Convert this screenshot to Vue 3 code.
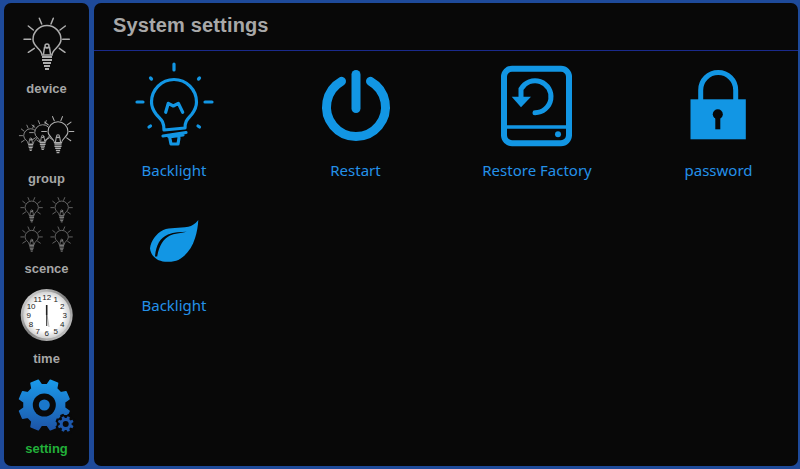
<script setup>
// 侧栏齿轮 + 时钟刻度都由数据算出来
function gearPath(cx, cy, rOut, rRoot, teeth) {
  const step = (Math.PI * 2) / teeth;
  const pts = [];
  for (let i = 0; i < teeth; i++) {
    const a = i * step - Math.PI / 2 + step / 2;
    const corners = [
      [rRoot, a - step * 0.32],
      [rOut, a - step * 0.2],
      [rOut, a + step * 0.2],
      [rRoot, a + step * 0.32]
    ];
    corners.forEach(([r, t]) => {
      pts.push((cx + r * Math.cos(t)).toFixed(1) + " " + (cy + r * Math.sin(t)).toFixed(1));
    });
  }
  return "M" + pts.join("L") + "Z";
}

const bigGear = gearPath(40.3, 39, 25.5, 20.5, 8);
const smallGear = gearPath(61.7, 58, 8, 6, 8);
const haloGear = gearPath(61.7, 58, 10.5, 9, 8);

const clockNums = Array.from({ length: 12 }, (_, i) => {
  const n = i + 1;
  const a = (n * Math.PI) / 6;
  return {
    n,
    x: (42.7 + 18 * Math.sin(a)).toFixed(1),
    y: (39 - 18 * Math.cos(a) + 3).toFixed(1)
  };
});

const groupBulbs = [
  { x: 26.7, y: 40, s: 0.5 },
  { x: 38.7, y: 37, s: 0.57 },
  { x: 54, y: 36, s: 0.71 }
];
const sceneBulbs = [
  { x: 27.7, y: 22 },
  { x: 57.7, y: 22 },
  { x: 27.7, y: 51.3 },
  { x: 57.7, y: 51.3 }
];
</script>

<template>
  <div class="page">
    <aside class="sidebar">
      <div class="nav-item">
        <svg class="nav-icon" viewBox="0 0 85 74">
          <defs>
            <symbol id="bulb" viewBox="0 0 48 56">
              <g fill="none" stroke="currentColor" stroke-width="1.5" stroke-linecap="round">
                <path d="M16.3 2.3L18.7 8M30.3 2.3L28 8M5.3 10L10.3 14M42.3 10L37 14M1 23.3H7.7M39.7 23.3H46.3M5.3 36.3L11.3 32.3M42 36.3L36.3 32.3" />
                <path fill="#090909" d="M19 39C19 33 10 31 10 23.5A14 14 0 1 1 38 23.5C38 31 29 33 29 39Z" />
                <path d="M20.5 38L21.5 31.5H26.5L27.5 38" />
                <circle cx="24" cy="30" r="2" />
              </g>
              <g fill="none" stroke="currentColor" stroke-width="2">
                <path d="M19 41H29M19 44H29M20 47H28M21 50H27" />
                <path d="M22 53H26" />
              </g>
            </symbol>
          </defs>
          <use class="bulb-light" href="#bulb" x="19" y="10" width="48" height="56" />
        </svg>
        <span class="nav-label">device</span>
      </div>

      <div class="nav-item">
        <svg class="nav-icon" viewBox="0 0 85 74">
          <use
            v-for="b in groupBulbs"
            :key="b.x"
            class="bulb-light"
            href="#bulb"
            :x="b.x - 24 * b.s"
            :y="b.y - 24 * b.s"
            :width="48 * b.s"
            :height="56 * b.s"
          />
        </svg>
        <span class="nav-label">group</span>
      </div>

      <div class="nav-item">
        <svg class="nav-icon" viewBox="0 0 85 74">
          <use
            v-for="b in sceneBulbs"
            :key="b.x + '-' + b.y"
            class="bulb-dim"
            href="#bulb"
            :x="b.x - 11.5"
            :y="b.y - 11.5"
            width="23"
            height="26.8"
          />
        </svg>
        <span class="nav-label">scence</span>
      </div>

      <div class="nav-item">
        <svg class="nav-icon" viewBox="0 0 85 74">
          <defs>
            <linearGradient id="ring" x1="0" y1="0" x2="1" y2="1">
              <stop offset="0" stop-color="#e6e6e6" />
              <stop offset="0.5" stop-color="#7f7f7f" />
              <stop offset="1" stop-color="#d8d8d8" />
            </linearGradient>
            <radialGradient id="face" cx="0.5" cy="0.5" r="0.5">
              <stop offset="0.7" stop-color="#ffffff" />
              <stop offset="1" stop-color="#d0d0d0" />
            </radialGradient>
          </defs>
          <circle cx="42.7" cy="39" r="26" fill="url(#ring)" />
          <circle cx="42.7" cy="39" r="23.5" fill="url(#face)" />
          <text
            v-for="c in clockNums"
            :key="c.n"
            class="clock-num"
            :x="c.x"
            :y="c.y"
            text-anchor="middle"
          >{{ c.n }}</text>
          <path d="M43 39L45 51" stroke="#bdbdbd" stroke-width="1" />
          <path d="M42.7 39V29" stroke="#222" stroke-width="1.6" />
          <path d="M42.7 39V50" stroke="#333" stroke-width="1.1" />
        </svg>
        <span class="nav-label">time</span>
      </div>

      <div class="nav-item">
        <svg class="nav-icon" viewBox="0 0 85 74">
          <defs>
            <linearGradient id="gearFill" x1="0" y1="0" x2="0" y2="1">
              <stop offset="0" stop-color="#1a9aea" />
              <stop offset="1" stop-color="#1d55a8" />
            </linearGradient>
          </defs>
          <path :d="bigGear" fill="url(#gearFill)" stroke="url(#gearFill)" stroke-width="1.5" stroke-linejoin="round" />
          <circle cx="40.3" cy="39" r="11.5" fill="#090909" />
          <circle cx="40.3" cy="39" r="5.5" fill="#1a78cc" />
          <path :d="haloGear" fill="#090909" />
          <path :d="smallGear" fill="#1d58ac" />
          <circle cx="61.7" cy="58" r="3" fill="#090909" />
        </svg>
        <span class="nav-label active">setting</span>
      </div>
    </aside>

    <main class="main">
      <header class="header">System settings</header>
      <div class="tiles">
        <div class="tile">
          <svg class="tile-icon" viewBox="0 0 100 100">
            <g fill="none" stroke="#1296e4" stroke-width="3.2" stroke-linecap="round" stroke-linejoin="round">
              <path d="M50 4V10M13 42H19M81 42H88M26.5 18L27.5 19M75.5 18L74.5 19M25 67L26.500 66M74 66L75.500 67" />
              <path d="M40 70C40 60 36 59 32 54C29 50 27.500 46 27.500 42A22.500 22.500 0 0 1 72.500 42C72.500 46 71 50 68 54C64 59 61 60 61 68Z" />
              <path d="M41.700 52.300L44.300 43.300L49.300 46L54.300 43.300L58.700 52.300" />
              <path d="M39 76L62 72.500M45 77L59 75M46 79L47 84H54L55 78" />
            </g>
          </svg>
          <span class="tile-label">Backlight</span>
        </div>

        <div class="tile">
          <svg class="tile-icon" viewBox="0 0 100 100">
            <g fill="none" stroke="#1296e4" stroke-width="9" stroke-linecap="round">
              <path d="M35.500 21.300A29.500 29.500 0 1 0 64.500 21.300" />
              <path d="M50 14.500V48.500" />
            </g>
          </svg>
          <span class="tile-label">Restart</span>
        </div>

        <div class="tile">
          <svg class="tile-icon" viewBox="0 0 100 100">
            <g fill="none" stroke="#1296e4">
              <rect x="17" y="8.700" width="65" height="74.600" rx="8" stroke-width="6" />
              <path d="M17 67H82" stroke-width="3.500" />
              <path d="M48 52.700A16 16 0 1 0 34 29V38" stroke-width="5" stroke-linecap="round" />
            </g>
            <path d="M24.700 36.700H44L34 47.300Z" fill="#1296e4" />
            <circle cx="71" cy="74.300" r="3" fill="#1296e4" />
          </svg>
          <span class="tile-label">Restore Factory</span>
        </div>

        <div class="tile">
          <svg class="tile-icon" viewBox="0 0 100 100">
            <path d="M31.700 40V30A17.500 17.500 0 0 1 66.700 30V40" fill="none" stroke="#1296e4" stroke-width="5" />
            <rect x="21.500" y="39.300" width="55.300" height="40" fill="#1296e4" />
            <circle cx="48.800" cy="54.300" r="5" fill="#080808" />
            <rect x="46.300" y="54" width="5" height="15.300" fill="#080808" />
          </svg>
          <span class="tile-label">password</span>
        </div>

        <div class="tile">
          <svg class="tile-icon" viewBox="0 0 100 100">
            <path d="M74.300 25C71 29 68 31 64.300 31.700C55 33.500 46 32 39.300 35C32 38.500 27 46 26 53.300C26.500 60 32 66 41 66.700C47 67 51 66.500 54.300 65C62 61 68 53 71 43.300C73 37 74 31 74.300 25Z" fill="#1296e4" />
            <path d="M31 61.500C32 50 36 43 44 39.500C50 37 57 37 62.700 36.700C56 38.500 50 38.500 46 40.500C39 44 35 51 33.200 61.500Z" fill="#080808" />
          </svg>
          <span class="tile-label">Backlight</span>
        </div>
      </div>
    </main>
  </div>
</template>

<style scoped>
.page {
  display: flex;
  gap: 5px;
  width: 800px;
  height: 469px;
  padding: 3px 2px 3px 4px;
  box-sizing: border-box;
  background: #1e4a9a;
  overflow: hidden;
}
.sidebar {
  display: flex;
  flex-direction: column;
  width: 85px;
  flex-shrink: 0;
  padding-top: 3px;
  box-sizing: border-box;
  background: #090909;
  border-radius: 7px;
}
.nav-item {
  display: flex;
  flex-direction: column;
  height: 90px;
}
.nav-icon {
  display: block;
  width: 85px;
  height: 74px;
  overflow: visible;
}
.bulb-light {
  color: #aeaeae;
}
.bulb-dim {
  color: #868686;
}
.clock-num {
  font-family: "Liberation Sans", Arial, sans-serif;
  font-size: 8px;
  fill: #222;
}
.nav-label {
  height: 16px;
  line-height: 17px;
  text-align: center;
  font-family: "Liberation Sans", Arial, sans-serif;
  font-size: 13px;
  font-weight: 700;
  color: #a6a6a6;
}
.nav-label.active {
  color: #22b03a;
}
.main {
  flex: 1;
  background: #080808;
  border-radius: 7px;
  overflow: hidden;
}
.header {
  height: 47px;
  padding-left: 19px;
  line-height: 45px;
  border-bottom: 1px solid #1a2a8c;
  font-family: "Liberation Sans", Arial, sans-serif;
  font-size: 20px;
  font-weight: 700;
  letter-spacing: 0.15px;
  color: #a8a8a8;
}
.tiles {
  display: grid;
  grid-template-columns: repeat(4, 160px);
  column-gap: 21.5px;
  row-gap: 13px;
  padding-top: 9px;
}
.tile {
  display: flex;
  flex-direction: column;
  align-items: center;
}
.tile-icon {
  display: block;
  width: 100px;
  height: 100px;
}
.tile-label {
  height: 22px;
  line-height: 21px;
  font-family: "Noto Sans", "Open Sans", sans-serif;
  font-size: 15px;
  color: #2491e8;
  white-space: nowrap;
}
</style>
